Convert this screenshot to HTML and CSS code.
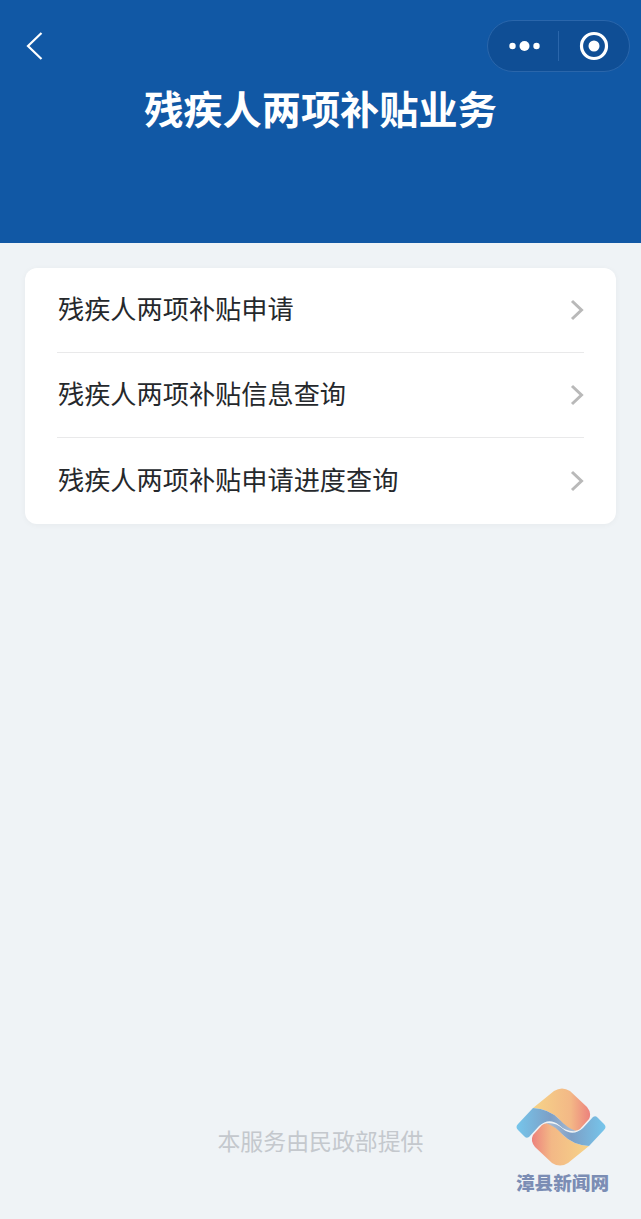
FILE: index.html
```html
<!DOCTYPE html>
<html lang="zh-CN">
<head>
    <meta charset="UTF-8">
    <meta name="viewport" content="width=device-width, initial-scale=1.0">
    <title>残疾人两项补贴业务</title>
    <link rel="stylesheet" href="styles.css">
</head>
<body>
<div class="page">
    <header class="top-bar">
        <div class="nav-row">
            <svg class="back-icon" width="18" height="30" viewBox="0 0 18 30">
                <path d="M16.5 2 L3 15 L16.5 28" fill="none" stroke="#fff" stroke-width="2.2"/>
            </svg>
            <div class="capsule">
                <div class="capsule-part">
                    <svg class="dots" width="34" height="12" viewBox="0 0 34 12">
                        <circle cx="4.5" cy="6" r="3.2" fill="#fff"/>
                        <circle cx="16.5" cy="6" r="5" fill="#fff"/>
                        <circle cx="28.5" cy="6" r="3.2" fill="#fff"/>
                    </svg>
                </div>
                <div class="capsule-line"></div>
                <div class="capsule-part">
                    <svg width="30" height="30" viewBox="0 0 30 30">
                        <circle cx="15" cy="15" r="12.5" fill="none" stroke="#fff" stroke-width="3.2"/>
                        <circle cx="15" cy="15" r="5.5" fill="#fff"/>
                    </svg>
                </div>
            </div>
        </div>
        <h1>残疾人两项补贴业务</h1>
    </header>

    <main class="content">
        <ul class="menu">
            <li class="menu-item">
                <span>残疾人两项补贴申请</span>
                <svg class="arrow" width="14" height="22" viewBox="0 0 14 22">
                    <path d="M2 2 L11.5 11 L2 20" fill="none" stroke="#b9b9b9" stroke-width="3"/>
                </svg>
            </li>
            <li class="menu-item">
                <span>残疾人两项补贴信息查询</span>
                <svg class="arrow" width="14" height="22" viewBox="0 0 14 22">
                    <path d="M2 2 L11.5 11 L2 20" fill="none" stroke="#b9b9b9" stroke-width="3"/>
                </svg>
            </li>
            <li class="menu-item">
                <span>残疾人两项补贴申请进度查询</span>
                <svg class="arrow" width="14" height="22" viewBox="0 0 14 22">
                    <path d="M2 2 L11.5 11 L2 20" fill="none" stroke="#b9b9b9" stroke-width="3"/>
                </svg>
            </li>
        </ul>
        <p class="provider">本服务由民政部提供</p>
    </main>

    <div class="watermark">
        <svg width="92" height="80" viewBox="0 0 92 80">
            <defs>
                <linearGradient id="orange" gradientUnits="userSpaceOnUse" x1="17" y1="0" x2="75" y2="0">
                    <stop offset="0" stop-color="#f6d388"/>
                    <stop offset="0.65" stop-color="#f3b886"/>
                    <stop offset="1" stop-color="#ec7f7c"/>
                </linearGradient>
                <linearGradient id="blue" gradientUnits="userSpaceOnUse" x1="0" y1="0" x2="58" y2="0">
                    <stop offset="0" stop-color="#75c6ec"/>
                    <stop offset="0.6" stop-color="#7d9fc6"/>
                    <stop offset="1" stop-color="#a9bcd4"/>
                </linearGradient>
            </defs>
            <g>
                <path d="M17 20 L38 3 Q46 -2 54 3 L71 19 Q76 25 73 31 L64 41 Q60 44 56 42 Q48 38 43 31 Q33 21 17 20 Z" fill="url(#orange)"/>
                <path d="M2 36 L17 20 Q33 21 43 31 Q51 40 60 43 Q50 44 43 37 Q33 29 23 38 L13 49 Q10 51 8 48 L2 42 Q-1 39 2 36 Z" fill="url(#blue)"/>
            </g>
            <g transform="rotate(180 45 39)">
                <path d="M17 20 L38 3 Q46 -2 54 3 L71 19 Q76 25 73 31 L64 41 Q60 44 56 42 Q48 38 43 31 Q33 21 17 20 Z" fill="url(#orange)"/>
                <path d="M2 36 L17 20 Q33 21 43 31 Q51 40 60 43 Q50 44 43 37 Q33 29 23 38 L13 49 Q10 51 8 48 L2 42 Q-1 39 2 36 Z" fill="url(#blue)"/>
            </g>
        </svg>
        <div class="watermark-name">漳县新闻网</div>
    </div>
</div>
</body>
</html>
```

FILE: styles.css
```css
* {
    box-sizing: border-box;
}

html, body {
    margin: 0;
    padding: 0;
}

body {
    font-family: "Noto Sans CJK SC", "Liberation Sans", sans-serif;
    background-color: #eff3f6;
}

.page {
    position: relative;
    width: 641px;
    height: 1219px;
    display: flex;
    flex-direction: column;
    overflow: hidden;
}

.top-bar {
    height: 243px;
    padding: 20px 11px 0 25px;
    background-color: #1158a5;
}

.nav-row {
    display: flex;
    justify-content: space-between;
    align-items: center;
}

.back-icon {
    display: block;
}

.capsule {
    width: 143px;
    height: 52px;
    display: flex;
    align-items: center;
    border: 1px solid #2a66ab;
    border-radius: 26px;
    background-color: #0f4e95;
}

.capsule-part {
    flex: 1;
    display: flex;
    justify-content: center;
    align-items: center;
}

.capsule-part svg {
    display: block;
}

.capsule-part .dots {
    margin-left: 4px;
}

.capsule-line {
    width: 1px;
    height: 30px;
    background-color: #2a66ab;
}

h1 {
    margin: 6px 0 0 -14px;
    font-size: 39.2px;
    line-height: 58px;
    font-weight: 700;
    color: #fff;
    text-align: center;
}

.content {
    flex: 1;
    display: flex;
    flex-direction: column;
    padding: 25px 25px 62px;
}

.menu {
    list-style: none;
    margin: 0;
    padding: 0 32px;
    border-radius: 12px;
    background-color: #fff;
    box-shadow: 0 1px 6px rgba(0, 0, 0, 0.04);
}

.menu-item {
    height: 85px;
    display: flex;
    justify-content: space-between;
    align-items: center;
    font-size: 26.2px;
    color: #25282c;
    border-bottom: 1px solid #e9e9ea;
}

.menu-item span {
    margin: 0 0 4px 1px;
}

.menu-item:last-child {
    height: 86px;
    border-bottom: none;
}

.provider {
    margin: auto 0 0;
    font-size: 22.9px;
    line-height: 34px;
    color: #c4c8cd;
    text-align: center;
}

.watermark {
    position: absolute;
    left: 516px;
    top: 1088px;
    width: 92px;
    text-align: center;
}

.watermark svg {
    display: block;
}

.watermark-name {
    margin-top: 0;
    font-size: 18.6px;
    line-height: 28px;
    font-weight: 900;
    color: #7b8db4;
    white-space: nowrap;
}
```
